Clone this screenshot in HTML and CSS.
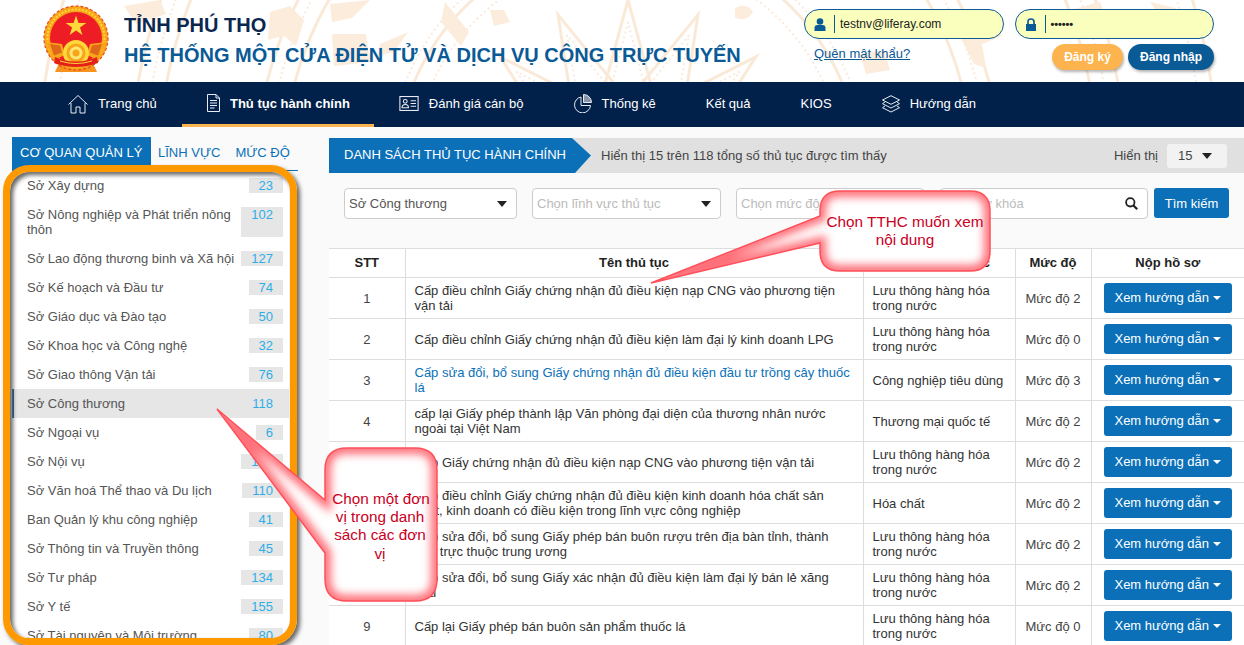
FILE: index.html
```html
<!DOCTYPE html>
<html lang="vi">
<head>
<meta charset="utf-8">
<title>Hệ thống một cửa điện tử</title>
<link rel="stylesheet" href="styles.css">
</head>
<body>
<div class="page">
  <header class="top">
    <svg class="top-pattern" width="1244" height="82" viewBox="0 0 1244 82" aria-hidden="true">
      <defs>
        <g id="ray"><path d="M0,-172 L-30,-62 L30,-62 Z" class="pt"/><path d="M0,-150 L-18,-80 L18,-80 Z" class="pt-d"/></g>
      </defs>
      <g transform="translate(628 172)">
        <circle r="215" class="pt-d"/><circle r="232" class="pt"/><circle r="240" class="pt-d"/>
        <circle r="345" class="pt"/><circle r="360" class="pt-d"/><circle r="372" class="pt"/>
        <circle r="470" class="pt"/><circle r="484" class="pt-d"/><circle r="498" class="pt"/>
        <circle r="575" class="pt-d"/><circle r="590" class="pt"/>
        <use href="#ray"/><use href="#ray" transform="rotate(24)"/><use href="#ray" transform="rotate(-24)"/>
        <use href="#ray" transform="rotate(48)"/><use href="#ray" transform="rotate(-48)"/>
        <use href="#ray" transform="rotate(72)"/><use href="#ray" transform="rotate(-72)"/>
      </g>
      <path class="pf" d="M270,12 l20,-6 l14,14 l-8,26 l-12,-10 l-16,4 Z M330,4 l40,-4 l-18,18 l-20,4 Z M332,34 l34,0 l4,28 l-36,4 Z M380,44 l28,-12 l-14,20 l-16,4 Z M124,6 l36,-6 l6,14 l-30,10 Z"/>
      <path class="pf" d="M445,2 l24,30 l-8,14 l-20,-24 Z M490,10 l14,0 l6,12 l-16,4 Z M735,8 q12,-6 18,4 q-6,10 -18,6 Z M960,36 l32,-14 l10,14 l-20,8 l4,24 l-12,-4 Z M1070,10 l30,-8 l4,10 l-26,10 Z M1150,2 l26,6 l-14,12 Z M860,54 l24,-4 l6,20 l-24,4 Z"/>
    </svg>
    <div class="brand">
      <svg class="emblem" width="66" height="68" viewBox="0 0 66 68" aria-hidden="true">
        <path d="M17,56 h32 l5,11 h-42 Z" fill="#f7941d"/>
        <circle cx="33" cy="33" r="32" fill="#f9a51a"/>
        <circle cx="33" cy="33" r="32" fill="none" stroke="#e8491d" stroke-width="1.2" stroke-dasharray="3 2"/>
        <circle cx="33" cy="33" r="26" fill="#ee1c25"/>
        <circle cx="33" cy="33" r="28.5" fill="none" stroke="#ffd83a" stroke-width="2" stroke-dasharray="2 1.5"/>
        <path d="M33,10 l3.6,11 h11.6 l-9.4,6.8 l3.6,11 l-9.4,-6.8 l-9.4,6.8 l3.6,-11 l-9.4,-6.8 h11.6 Z" fill="#ffd83a" transform="translate(10.6 3.7) scale(.68)"/>
        <path d="M3,37 l16,2 l3,11 l-11,5 Z M63,37 l-16,2 l-3,11 l11,5 Z" fill="#f9a51a"/>
        <path d="M7,39 l10,1.5 l2,7 l-8,3 Z M59,39 l-10,1.5 l-2,7 l8,3 Z" fill="#c9351c" opacity=".55"/>
        <circle cx="33" cy="48" r="13" fill="#ffd83a"/>
        <circle cx="33" cy="48" r="9.5" fill="#f9a51a"/>
        <circle cx="33" cy="48" r="6.5" fill="#ffe873"/>
        <circle cx="33" cy="48" r="3.5" fill="#f9a51a"/>
        <path d="M12,52 q21,9 42,0 l1,6 q-22,8 -44,0 Z" fill="#e32119"/>
        <path d="M17,56 q16,5 32,0" fill="none" stroke="#ffd83a" stroke-width="1"/>
      </svg>
      <div class="brand-text">
        <div class="brand-l1">TỈNH PHÚ THỌ</div>
        <div class="brand-l2">HỆ THỐNG MỘT CỬA ĐIỆN TỬ VÀ DỊCH VỤ CÔNG TRỰC TUYẾN</div>
      </div>
    </div>
    <div class="auth">
      <div class="auth-row">
        <div class="field">
          <svg class="field-ic" width="12" height="13" viewBox="0 0 12 13" aria-hidden="true"><circle cx="6" cy="3.5" r="3.3"/><path d="M0.5,13 V10 Q0.5,7 3.5,7 H8.5 Q11.5,7 11.5,10 V13 Z"/></svg>
          <span class="field-sep"></span><span class="field-val">testnv@liferay.com</span>
        </div>
        <div class="field">
          <svg class="field-ic" width="12" height="13" viewBox="0 0 12 13" aria-hidden="true"><path d="M1,6 H11 V13 H1 Z"/><path d="M3,6 V3.8 Q3,1 6,1 Q9,1 9,3.8 V6" fill="none" stroke="#0a5a96" stroke-width="1.7"/></svg>
          <span class="field-sep"></span><span class="field-val field-dots">••••••</span>
        </div>
      </div>
      <div class="auth-row auth-row-2">
        <a class="forgot" href="#">Quên mật khẩu?</a>
        <div class="auth-btns">
          <button class="pill pill-orange">Đăng ký</button>
          <button class="pill pill-blue">Đăng nhập</button>
        </div>
      </div>
    </div>
  </header>

  <nav class="nav">
    <a class="nav-item nav-first" href="#"><svg class="nav-ic" width="20" height="20" viewBox="0 0 20 20" aria-hidden="true"><path d="M0.5,10.5 L10,1.5 L19.5,10.5"/><path d="M3,9 V19 H8 V13 H12 V19 H17 V9"/></svg>Trang chủ</a>
    <a class="nav-item nav-active" href="#"><svg class="nav-ic nav-ic-sm" width="13" height="18" viewBox="0 0 13 18" aria-hidden="true"><path d="M0.5,0.5 H9 L12.5,4 V17.5 H0.5 Z"/><path d="M9,0.5 V4 H12.5"/><path d="M3,6.5 H10 M3,9 H10 M3,11.5 H10 M3,14 H7.5"/></svg>Thủ tục hành chính</a>
    <a class="nav-item" href="#"><svg class="nav-ic" width="20" height="15" viewBox="0 0 18 14" aria-hidden="true"><rect x="0.5" y="0.5" width="17" height="13"/><circle cx="5.5" cy="5" r="1.8"/><path d="M2.5,11 Q2.5,8 5.5,8 Q8.5,8 8.5,11 Z"/><path d="M10.5,4.5 H15.5 M10.5,7 H15.5 M10.5,9.5 H15.5"/></svg>Đánh giá cán bộ</a>
    <a class="nav-item" href="#"><svg class="nav-ic" width="18" height="19" viewBox="0 0 18 19" aria-hidden="true"><path d="M7,3 A8,8 0 1 0 16.5,11.5 H7 Z"/><path d="M9.5,0.5 A8,8 0 0 1 17.5,8.5 H9.5 Z" fill="#8b96a8"/></svg>Thống kê</a>
    <a class="nav-item" href="#">Kết quả</a>
    <a class="nav-item" href="#">KIOS</a>
    <a class="nav-item" href="#"><svg class="nav-ic" width="18" height="18" viewBox="0 0 18 18" aria-hidden="true"><path d="M9,0.7 L17.5,5 L9,9.3 L0.5,5 Z"/><path d="M3,7 L0.5,8.7 L9,13 L17.5,8.7 L15,7"/><path d="M3,11 L0.5,12.7 L9,17 L17.5,12.7 L15,11"/></svg>Hướng dẫn</a>
  </nav>

  <main class="main">
    <aside class="side">
      <div class="tabs">
        <a class="tab tab-active" href="#">CƠ QUAN QUẢN LÝ</a>
        <a class="tab tab-b" href="#">LĨNH VỰC</a>
        <a class="tab tab-c" href="#">MỨC ĐỘ</a>
      </div>
      <ul class="orgs">
        <li class="org"><span class="org-name">Sở Xây dựng</span><span class="org-num">23</span></li>
        <li class="org"><span class="org-name">Sở Nông nghiệp và Phát triển nông thôn</span><span class="org-num">102</span></li>
        <li class="org"><span class="org-name">Sở Lao động thương binh và Xã hội</span><span class="org-num">127</span></li>
        <li class="org"><span class="org-name">Sở Kế hoạch và Đầu tư</span><span class="org-num">74</span></li>
        <li class="org"><span class="org-name">Sở Giáo dục và Đào tạo</span><span class="org-num">50</span></li>
        <li class="org"><span class="org-name">Sở Khoa học và Công nghệ</span><span class="org-num">32</span></li>
        <li class="org"><span class="org-name">Sở Giao thông Vận tải</span><span class="org-num">76</span></li>
        <li class="org org-active"><span class="org-name">Sở Công thương</span><span class="org-num">118</span></li>
        <li class="org"><span class="org-name">Sở Ngoại vụ</span><span class="org-num">6</span></li>
        <li class="org"><span class="org-name">Sở Nội vụ</span><span class="org-num">102</span></li>
        <li class="org"><span class="org-name">Sở Văn hoá Thể thao và Du lịch</span><span class="org-num">110</span></li>
        <li class="org"><span class="org-name">Ban Quản lý khu công nghiệp</span><span class="org-num">41</span></li>
        <li class="org"><span class="org-name">Sở Thông tin và Truyền thông</span><span class="org-num">45</span></li>
        <li class="org"><span class="org-name">Sở Tư pháp</span><span class="org-num">134</span></li>
        <li class="org"><span class="org-name">Sở Y tế</span><span class="org-num">155</span></li>
        <li class="org"><span class="org-name">Sở Tài nguyên và Môi trường</span><span class="org-num">80</span></li>
      </ul>
    </aside>

    <section class="content">
      <div class="bar">
        <h2 class="bar-title">DANH SÁCH THỦ TỤC HÀNH CHÍNH</h2>
        <span class="bar-info">Hiển thị 15 trên 118 tổng số thủ tục được tìm thấy</span>
        <span class="bar-show">Hiển thị</span>
        <div class="bar-select"><span>15</span><i class="caret"></i></div>
      </div>
      <div class="filters">
        <div class="sel sel-a"><span>Sở Công thương</span><i class="caret"></i></div>
        <div class="sel sel-b sel-ph"><span>Chọn lĩnh vực thủ tục</span><i class="caret"></i></div>
        <div class="sel sel-c sel-ph"><span>Chọn mức độ</span><i class="caret"></i></div>
        <div class="search"><span>Nhập từ khóa</span>
          <svg width="13" height="13" viewBox="0 0 13 13" aria-hidden="true"><circle cx="5.3" cy="5.3" r="4.2" fill="none" stroke="#222" stroke-width="1.8"/><path d="M8.5,8.5 L12.2,12.2" stroke="#222" stroke-width="2.2"/></svg>
        </div>
        <button class="find">Tìm kiếm</button>
      </div>
      <table class="grid">
        <colgroup><col class="c1"><col class="c2"><col class="c3"><col class="c4"><col class="c5"></colgroup>
        <thead><tr><th>STT</th><th>Tên thủ tục</th><th>Lĩnh vực thủ tục</th><th>Mức độ</th><th>Nộp hồ sơ</th></tr></thead>
        <tbody>
          <tr><td class="ctr">1</td><td>Cấp điều chỉnh Giấy chứng nhận đủ điều kiện nạp CNG vào phương tiện vận tải</td><td>Lưu thông hàng hóa trong nước</td><td class="ctr">Mức độ 2</td><td class="ctr"><button class="guide">Xem hướng dẫn<i class="caret-w"></i></button></td></tr>
          <tr><td class="ctr">2</td><td>Cấp điều chỉnh Giấy chứng nhận đủ điều kiện làm đại lý kinh doanh LPG</td><td>Lưu thông hàng hóa trong nước</td><td class="ctr">Mức độ 0</td><td class="ctr"><button class="guide">Xem hướng dẫn<i class="caret-w"></i></button></td></tr>
          <tr><td class="ctr">3</td><td class="lnk">Cấp sửa đổi, bổ sung Giấy chứng nhận đủ điều kiện đầu tư trồng cây thuốc lá</td><td>Công nghiệp tiêu dùng</td><td class="ctr">Mức độ 3</td><td class="ctr"><button class="guide">Xem hướng dẫn<i class="caret-w"></i></button></td></tr>
          <tr><td class="ctr">4</td><td>cấp lại Giấy phép thành lập Văn phòng đại diện của thương nhân nước ngoài tại Việt Nam</td><td>Thương mại quốc tế</td><td class="ctr">Mức độ 2</td><td class="ctr"><button class="guide">Xem hướng dẫn<i class="caret-w"></i></button></td></tr>
          <tr><td class="ctr">5</td><td>Cấp Giấy chứng nhận đủ điều kiện nạp CNG vào phương tiện vận tải</td><td>Lưu thông hàng hóa trong nước</td><td class="ctr">Mức độ 2</td><td class="ctr"><button class="guide">Xem hướng dẫn<i class="caret-w"></i></button></td></tr>
          <tr><td class="ctr">6</td><td>Cấp điều chỉnh Giấy chứng nhận đủ điều kiện kinh doanh hóa chất sản xuất, kinh doanh có điều kiện trong lĩnh vực công nghiệp</td><td>Hóa chất</td><td class="ctr">Mức độ 2</td><td class="ctr"><button class="guide">Xem hướng dẫn<i class="caret-w"></i></button></td></tr>
          <tr><td class="ctr">7</td><td>Cấp sửa đổi, bổ sung Giấy phép bán buôn rượu trên địa bàn tỉnh, thành phố trực thuộc trung ương</td><td>Lưu thông hàng hóa trong nước</td><td class="ctr">Mức độ 2</td><td class="ctr"><button class="guide">Xem hướng dẫn<i class="caret-w"></i></button></td></tr>
          <tr><td class="ctr">8</td><td>Cấp sửa đổi, bổ sung Giấy xác nhận đủ điều kiện làm đại lý bán lẻ xăng dầu</td><td>Lưu thông hàng hóa trong nước</td><td class="ctr">Mức độ 2</td><td class="ctr"><button class="guide">Xem hướng dẫn<i class="caret-w"></i></button></td></tr>
          <tr><td class="ctr">9</td><td>Cấp lại Giấy phép bán buôn sản phẩm thuốc lá</td><td>Lưu thông hàng hóa trong nước</td><td class="ctr">Mức độ 0</td><td class="ctr"><button class="guide">Xem hướng dẫn<i class="caret-w"></i></button></td></tr>
        </tbody>
      </table>
    </section>
  </main>

  <div class="frame"></div>

  <svg class="notes" width="1244" height="645" viewBox="0 0 1244 645">
    <defs>
      <path id="call1" d="M840,191 H970 Q990,191 990,211 V251 Q990,271 970,271 H840 Q820,271 820,251 V243 L651,283 L820,216 V211 Q820,191 840,191 Z"/>
      <path id="call2" d="M347,448 H415 Q437,448 437,470 V579 Q437,601 415,601 H347 Q325,601 325,579 V553 L217,409 L325,500 V470 Q325,448 347,448 Z"/>
      <clipPath id="clip1"><use href="#call1"/></clipPath>
      <clipPath id="clip2"><use href="#call2"/></clipPath>
      <filter id="soft" x="-20%" y="-20%" width="140%" height="140%"><feGaussianBlur stdDeviation="4"/></filter>
    </defs>
    <g>
      <use href="#call1" class="note-fill"/>
      <g clip-path="url(#clip1)"><use href="#call1" class="note-glow" filter="url(#soft)"/></g>
      <use href="#call1" class="note-line"/>
      <text class="note-text" x="905" y="227">Chọn TTHC muốn xem</text>
      <text class="note-text" x="905" y="245">nội dung</text>
    </g>
    <g>
      <use href="#call2" class="note-fill"/>
      <g clip-path="url(#clip2)"><use href="#call2" class="note-glow" filter="url(#soft)"/></g>
      <use href="#call2" class="note-line"/>
      <text class="note-text" x="381" y="504">Chọn một đơn</text>
      <text class="note-text" x="380" y="522">vị trong danh</text>
      <text class="note-text" x="380" y="540">sách các đơn</text>
      <text class="note-text" x="380" y="559">vị</text>
    </g>
  </svg>
</div>
</body>
</html>
```

FILE: styles.css
```css
* { box-sizing: border-box; }
html, body { margin: 0; height: 100%; overflow: hidden; }
body { background: #fafafa; font-family: "Liberation Sans", Arial, sans-serif; font-size: 13px; color: #333; }
a { text-decoration: none; }
button { font-family: inherit; border: 0; cursor: pointer; }
.page { position: relative; width: 1244px; height: 645px; overflow: hidden; }

/* header */
.top { position: relative; height: 82px; background: #fff; display: flex; justify-content: space-between; overflow: hidden; }
.top-pattern { position: absolute; inset: 0; }
.pt { fill: none; stroke: #fbe9d8; stroke-width: 3; }
.pt-d { fill: none; stroke: #fbeadb; stroke-width: 2; stroke-dasharray: 2 3; }
.pf { fill: #fcecdc; }
.brand { position: relative; display: flex; align-items: flex-start; padding: 5px 0 0 43px; }
.emblem { flex: none; }
.brand-text { margin: 5px 0 0 15px; font-weight: 700; font-size: 20px; line-height: 30px; }
.brand-l1 { color: #0b274f; }
.brand-l2 { color: #0a5a96; white-space: nowrap; }
.auth { position: relative; width: 410px; margin-right: 30px; padding-top: 9px; }
.auth-row { display: flex; gap: 11px; }
.field { width: 200px; height: 30px; background: #fbffbd; border: 1px solid #0a5a96; border-radius: 15px; display: flex; align-items: center; padding-left: 9px; }
.field-ic { fill: #0a5a96; flex: none; }
.field-sep { width: 1px; height: 18px; background: #0a5a96; margin: 0 5px 0 8px; }
.field-val { font-size: 12px; color: #222; }
.field-dots { font-size: 11px; letter-spacing: -.1px; font-weight: 700; }
.auth-row-2 { justify-content: space-between; padding: 5px 0 0 10px; align-items: flex-start; }
.forgot { color: #0a5a96; text-decoration: underline; font-size: 13px; line-height: 18px; margin-top: 1px; }
.auth-btns { display: flex; gap: 5px; }
.pill { height: 26px; border-radius: 13px; color: #fff; font-size: 12px; font-weight: 700; padding: 0; box-shadow: 1px 2px 3px rgba(0,0,0,.3); }
.pill-orange { width: 71px; background: #fdb44e; }
.pill-blue { width: 86px; background: #0a5a96; }

/* nav */
.nav { height: 45px; background: #01214b; display: flex; padding-left: 43px; }
.nav-item { display: flex; align-items: center; gap: 10px; padding: 0 25px 2px; color: #fff; font-size: 13px; height: 45px; white-space: nowrap; }
.nav-first { letter-spacing: .1px; }
.nav-active { font-weight: 700; border-bottom: 3px solid #fdb44e; padding: 0 24px 0 25px; }
.nav-ic { fill: none; stroke: #e8ecf2; stroke-width: 1; flex: none; }

/* layout */
.main { display: flex; align-items: flex-start; padding-left: 12px; gap: 31px; }

/* sidebar */
.side { width: 286px; flex: none; padding-top: 10px; }
.tabs { display: flex; border-bottom: 1px solid #0b70b8; height: 34px; }
.tab { color: #0b70b8; line-height: 32px; font-size: 13px; white-space: nowrap; }
.tab-active { background: #0b70b8; color: #fff; width: 139px; height: 34px; padding-left: 8px; }
.tab-b { margin-left: 7px; }
.tab-c { margin-left: 15px; }
.orgs { list-style: none; margin: 0; padding: 0; width: 277px; background: #fff; height: 480px; overflow: hidden; }
.org { display: flex; justify-content: space-between; gap: 4px; padding: 7px 6px 7px 15px; line-height: 15px; color: #555; }
.org-name { flex: 1; }
.org-num { flex: none; background: #e6e6e6; color: #2eaee8; padding: 0 10px; min-width: 25px; text-align: right; }
.org-active { background: #e6e6e6; box-shadow: inset 2px 0 0 #0a4a80; }

/* frame */
.frame { position: absolute; left: 3px; top: 165px; width: 294px; height: 480px; border: 7px solid #f90; border-radius: 26px; box-shadow: 3px 3px 4px #666, inset 3px 3px 4px #666; pointer-events: none; }

/* content */
.content { flex: 1; min-width: 0; padding-top: 11px; }
.bar { height: 35px; background: #e0e0e0; display: flex; align-items: center; position: relative; }
.bar-title { margin: 0; width: 262px; height: 35px; background: #0b70b8; color: #fff; font-size: 13px; font-weight: 400; line-height: 33px; padding-left: 15px; clip-path: polygon(0 0, 243px 0, 262px 50%, 246px 100%, 0 100%); white-space: nowrap; }
.bar-info { margin-left: 10px; color: #444; flex: 1; }
.bar-show { color: #444; margin-right: 9px; }
.bar-select { width: 60px; height: 24px; background: #f2f2f2; border-radius: 3px; margin-right: 17px; display: flex; align-items: center; justify-content: space-between; padding: 0 15px 0 11px; color: #444; }
.caret { width: 0; height: 0; border-left: 5px solid transparent; border-right: 5px solid transparent; border-top: 6px solid #222; flex: none; }
.filters { display: flex; align-items: flex-start; height: 75px; padding: 15px 0 0 15px; }
.sel { height: 31px; border: 1px solid #ccc; border-radius: 4px; background: #fff; display: flex; align-items: center; justify-content: space-between; padding: 0 9px 0 4px; color: #555; }
.sel-a { width: 173px; margin-right: 15px; }
.sel-b { width: 189px; margin-right: 15px; }
.sel-c { width: 188px; margin-right: 16px; }
.sel-ph { color: #bbb; }
.search { width: 208px; height: 31px; border: 1px solid #ccc; border-radius: 4px; background: #fff; display: flex; align-items: center; justify-content: space-between; padding: 0 9px 0 4px; color: #bbb; margin-right: 6px; }
.find { width: 75px; height: 30px; background: #0b70b8; color: #fff; border-radius: 3px; font-size: 13px; padding: 0; }

/* table */
.grid { width: 915px; border-collapse: collapse; table-layout: fixed; }
.c1 { width: 76px; } .c2 { width: 458px; } .c3 { width: 152px; } .c4 { width: 76px; } .c5 { width: 153px; }
.grid th { height: 29px; border: 1px solid #ddd; border-left: 0; border-right: 1px solid #ddd; color: #222; font-size: 13px; font-weight: 700; padding: 0 0 2px; background: #fff; }
.grid td { height: 41px; border: 1px solid #ddd; border-left: 0; padding: 0 9px; line-height: 15px; color: #333; background: #fff; vertical-align: middle; }
.grid th:last-child, .grid td:last-child { border-right: 0; }
.grid td.ctr { text-align: center; padding: 0; color: #444; }
.grid td.lnk { color: #0b70b8; }
.guide { display: block; margin: 0 auto; width: 128px; height: 30px; background: #0b70b8; color: #fff; border-radius: 3px; font-size: 13px; padding: 0 0 2px; }
.caret-w { display: inline-block; width: 0; height: 0; margin-left: 4px; vertical-align: 2px; border-left: 4px solid transparent; border-right: 4px solid transparent; border-top: 4px solid #fff; }

/* callouts */
.notes { position: absolute; left: 0; top: 0; pointer-events: none; }
.note-fill { fill: #fff; }
.note-glow { fill: none; stroke: #ff6e78; stroke-width: 12; }
.note-line { fill: none; stroke: #ff4f58; stroke-width: 1.5; }
.note-text { fill: #c8001e; font-family: "Liberation Sans", Arial, sans-serif; font-size: 15.3px; text-anchor: middle; }
```
